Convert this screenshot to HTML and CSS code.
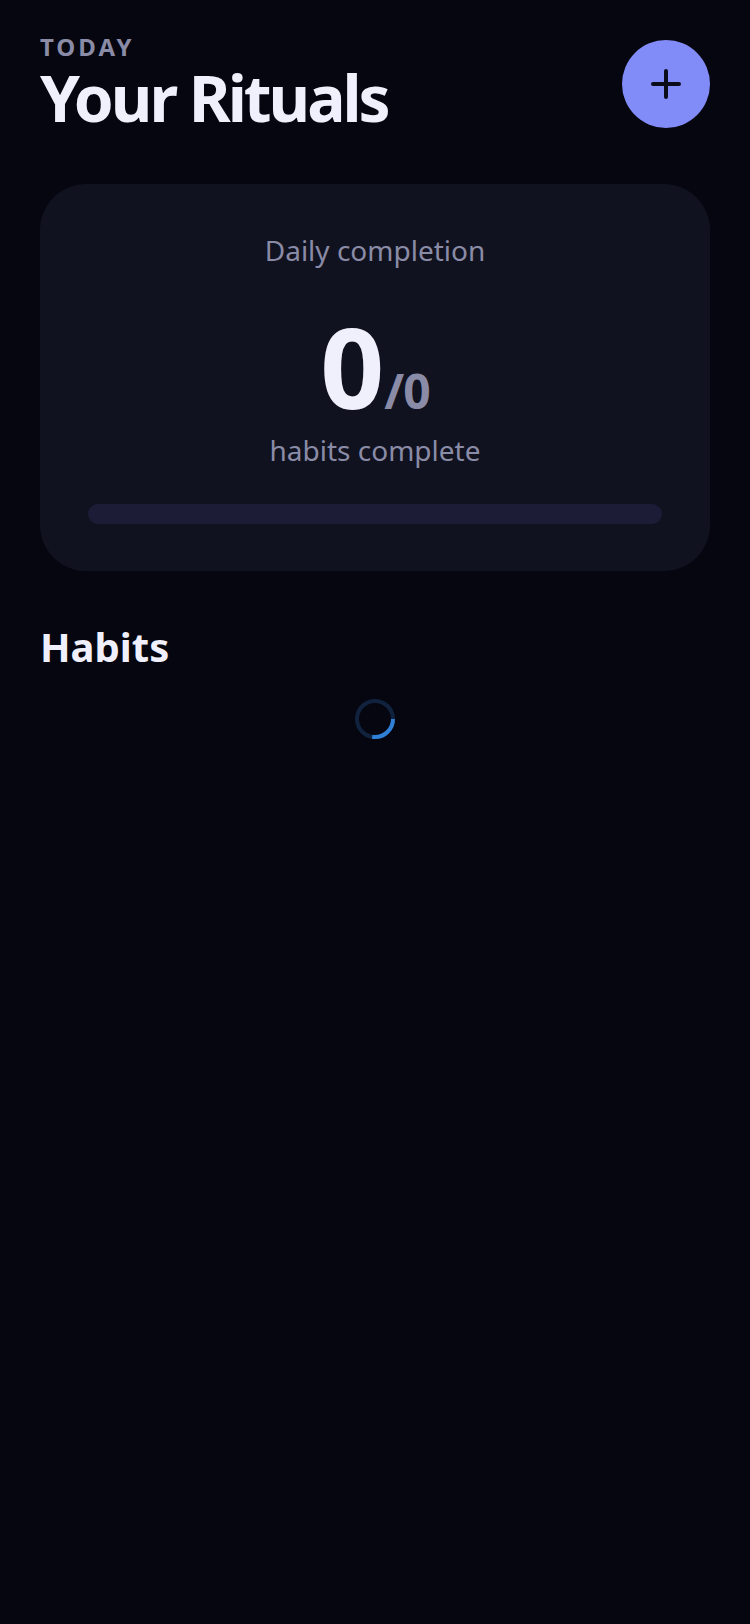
FILE: index.html
```html
<!DOCTYPE html>
<html lang="en">
<head>
    <meta charset="UTF-8">
    <meta name="viewport" content="width=device-width, initial-scale=1.0">
    <title>Your Rituals</title>
    <link rel="stylesheet" href="styles.css">
</head>
<body>

<div class="screen">
    <header class="header">
        <div class="header-text">
            <div class="eyebrow">TODAY</div>
            <h1 class="title">Your Rituals</h1>
        </div>
        <button class="add-btn" aria-label="Add habit">
            <svg width="32" height="32" viewBox="0 0 32 32">
                <path d="M16 3 V29 M3 16 H29" stroke="#0b0c1a" stroke-width="4" stroke-linecap="round" fill="none"/>
            </svg>
        </button>
    </header>

    <section class="summary-card">
        <div class="summary-label">Daily completion</div>
        <div class="summary-count">
            <span class="count-done">0</span><span class="count-total">/0</span>
        </div>
        <div class="summary-sub">habits complete</div>
        <div class="progress-track">
            <div class="progress-fill" style="width: 0%"></div>
        </div>
    </section>

    <h2 class="section-title">Habits</h2>

    <div class="loader">
        <svg width="40" height="40" viewBox="0 0 40 40">
            <circle cx="20" cy="20" r="18" stroke="#10223d" stroke-width="4" fill="none"/>
            <circle cx="20" cy="20" r="18" stroke="#2f7fd6" stroke-width="4" fill="none"
                    stroke-dasharray="31 200"/>
        </svg>
    </div>
</div>

</body>
</html>
```

FILE: styles.css
```css
body {
    margin: 0;
    padding: 0;
    background-color: #05060f;
    font-family: "Noto Sans", "Open Sans", sans-serif;
    color: #f0f0fc;
}

.screen {
    min-height: 1624px;
    padding: 31px 40px 0;
    box-sizing: border-box;
}

.header {
    display: flex;
    justify-content: space-between;
    align-items: flex-start;
}

.eyebrow {
    font-size: 24px;
    line-height: 32px;
    font-weight: 700;
    letter-spacing: 3px;
    color: #8a8ba6;
}

.title {
    margin: 0;
    font-size: 64px;
    line-height: 70px;
    font-weight: 700;
    letter-spacing: -3px;
    color: #f0f0fc;
}

.add-btn {
    width: 88px;
    height: 88px;
    margin-top: 9px;
    border: none;
    border-radius: 50%;
    background-color: #828cf8;
    display: flex;
    align-items: center;
    justify-content: center;
    padding: 0;
}

.summary-card {
    margin-top: 51px;
    padding: 48px 48px 47px;
    background-color: #11121f;
    border-radius: 46px;
    text-align: center;
}

.summary-label,
.summary-sub {
    font-size: 28px;
    line-height: 36px;
    color: #8a8ba6;
}

.summary-count {
    margin-top: 38px;
    font-size: 112px;
    line-height: 120px;
    font-weight: 700;
}

.count-done {
    color: #f0f0fc;
}

.count-total {
    font-size: 48px;
    line-height: 1;
    letter-spacing: -1px;
    color: #8a8ba6;
}

.summary-sub {
    margin-top: 6px;
}

.progress-track {
    margin-top: 36px;
    height: 20px;
    border-radius: 10px;
    background-color: #1c1c36;
    overflow: hidden;
}

.progress-fill {
    height: 100%;
    background-color: #828cf8;
}

.section-title {
    margin: 52px 0 0;
    font-size: 40px;
    line-height: 48px;
    font-weight: 700;
    color: #f0f0fc;
}

.loader {
    margin-top: 28px;
    display: flex;
    justify-content: center;
}
```
